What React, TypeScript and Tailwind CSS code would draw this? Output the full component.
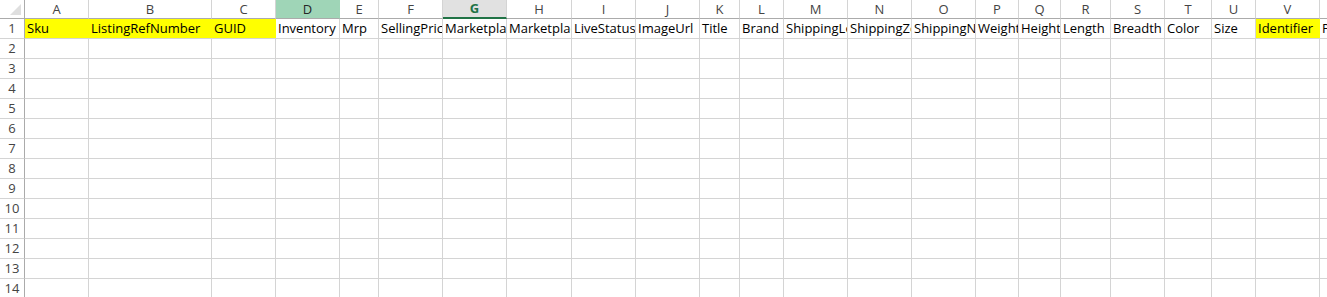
import React from 'react';

const cols: { key: string; w: number }[] = [
  { key: 'A', w: 64 },
  { key: 'B', w: 123 },
  { key: 'C', w: 64 },
  { key: 'D', w: 64 },
  { key: 'E', w: 39 },
  { key: 'F', w: 64 },
  { key: 'G', w: 64 },
  { key: 'H', w: 65 },
  { key: 'I', w: 64 },
  { key: 'J', w: 64 },
  { key: 'K', w: 40 },
  { key: 'L', w: 44 },
  { key: 'M', w: 64 },
  { key: 'N', w: 64 },
  { key: 'O', w: 64 },
  { key: 'P', w: 43 },
  { key: 'Q', w: 42 },
  { key: 'R', w: 50 },
  { key: 'S', w: 54 },
  { key: 'T', w: 47 },
  { key: 'U', w: 44 },
  { key: 'V', w: 64 },
  { key: 'W', w: 64 },
];

const headers = [
  'Sku', 'ListingRefNumber', 'GUID', 'Inventory', 'Mrp', 'SellingPrice', 'MarketplaceId',
  'MarketplaceName', 'LiveStatus', 'ImageUrl', 'Title', 'Brand', 'ShippingLocal',
  'ShippingZonal', 'ShippingNational', 'Weight', 'Height', 'Length', 'Breadth', 'Color',
  'Size', 'Identifier', 'Parent',
];

const yellow = new Set([0, 1, 2, 21]);
const rows = Array.from({ length: 14 }, (_, i) => i + 1);

const App: React.FC = () => {
  return (
    <div className="w-[1327px] h-[297px] overflow-hidden bg-white font-['Open_Sans',sans-serif] text-[13px] select-none">
      {/* column letters */}
      <div className="flex h-[19px]">
        <div className="relative w-[25px] shrink-0 border-r border-b border-[#ababab] bg-white">
          <div className="absolute right-[3px] bottom-[3px] w-0 h-0 border-l-[11px] border-l-transparent border-b-[11px] border-b-[#dfdfdf]" />
        </div>
        {cols.map((c) => {
          const isD = c.key === 'D';
          const isG = c.key === 'G';
          return (
            <div
              key={c.key}
              style={{ width: c.w }}
              className={
                'shrink-0 flex items-center justify-center border-r leading-none ' +
                (isG
                  ? 'bg-[#e1e1e1] border-[#d4d4d4] border-b-2 border-b-[#217346] text-[#217346] font-bold'
                  : isD
                  ? 'bg-[#9fd5b7] border-[#9fd5b7] border-b border-b-[#ababab] text-[#262626]'
                  : 'bg-white border-[#d4d4d4] border-b border-b-[#ababab] text-[#444]')
              }
            >
              {c.key}
            </div>
          );
        })}
      </div>

      {rows.map((r) => (
        <div key={r} className="flex h-[20px]">
          <div className="w-[25px] shrink-0 flex items-center justify-center border-r border-b border-r-[#ababab] border-b-[#d4d4d4] text-[#444] leading-none">
            {r}
          </div>
          {cols.map((c, i) => {
            const text = r === 1 ? headers[i] : '';
            const hl = r === 1 && yellow.has(i);
            return (
              <div
                key={c.key}
                style={{ width: c.w }}
                className={
                  'shrink-0 overflow-hidden whitespace-nowrap pl-[2px] flex items-end pb-[1px] leading-[17px] text-black ' +
                  (hl ? 'bg-[#ffff00] border-b border-b-[#d4d4d4] ' : 'border-r border-b border-[#d4d4d4] ')
                }
              >
                {text}
              </div>
            );
          })}
        </div>
      ))}
    </div>
  );
};

export default App;
